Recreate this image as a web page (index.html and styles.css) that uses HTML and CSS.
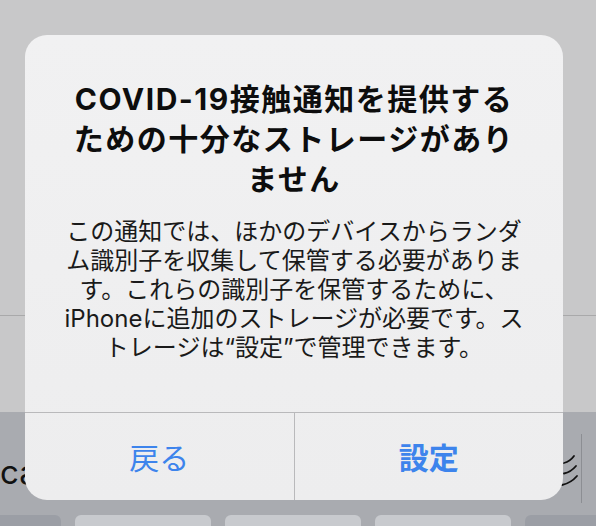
FILE: index.html
```html
<!DOCTYPE html>
<html lang="ja">
<head>
<meta charset="utf-8">
<title>Alert</title>
<link rel="stylesheet" href="styles.css">
</head>
<body>
<div class="screen">
  <div class="backdrop">
    <div class="backdrop-upper"></div>
  </div>
  <div class="keyboard">
    <div class="suggest-bar">
      <span class="suggest-word">ca</span>
      <div class="suggest-right">
        <svg class="suggest-glyph" width="22" height="38" viewBox="0 0 22 38">
          <path d="M5 12 Q11 10.5 15 5" fill="none" stroke="#111" stroke-width="1.8" stroke-linecap="round"/>
          <path d="M5 22.5 Q12 21 17 15" fill="none" stroke="#111" stroke-width="1.8" stroke-linecap="round"/>
          <path d="M3 34 Q12 32 18 25" fill="none" stroke="#111" stroke-width="1.8" stroke-linecap="round"/>
        </svg>
        <div class="suggest-divider"></div>
      </div>
    </div>
    <div class="key-row">
      <div class="key key-dark key-first"></div>
      <div class="key key-light"></div>
      <div class="key key-light"></div>
      <div class="key key-light"></div>
      <div class="key key-dark key-last"></div>
    </div>
  </div>

  <div class="alert">
    <div class="alert-message">
      <h1 class="alert-title">COVID-19接触通知を提供する<br>ための十分なストレージがあり<br>ません</h1>
      <p class="alert-body">この通知では、ほかのデバイスからランダ<br>ム識別子を収集して保管する必要がありま<br>す。これらの識別子を保管するために、<br>iPhoneに追加のストレージが必要です。ス<br>トレージは“設定”で管理できます。</p>
    </div>
    <div class="alert-actions">
      <div class="alert-button">戻る</div>
      <div class="alert-button alert-button-primary">設定</div>
    </div>
  </div>
</div>
</body>
</html>
```
FILE: styles.css
```css
* { box-sizing: border-box; }

html, body {
  margin: 0;
  padding: 0;
}

body {
  width: 596px;
  height: 526px;
  overflow: hidden;
  font-family: Inter, "Noto Sans CJK JP", sans-serif;
  background: #c8c8c8;
}

.screen {
  position: relative;
  width: 596px;
  height: 526px;
  overflow: hidden;
  display: flex;
  flex-direction: column;
}

.backdrop {
  height: 412px;
  background: #c8c8c9;
}

.backdrop-upper {
  height: 316px;
  border-bottom: 1px solid #a9a9aa;
}

.keyboard {
  flex: 1;
  background: #a9abb0;
  display: flex;
  flex-direction: column;
}

.suggest-bar {
  height: 103px;
  display: flex;
  align-items: center;
  justify-content: space-between;
}

.suggest-word {
  font-family: Inter, "Liberation Sans", sans-serif;
  font-size: 33px;
  color: #111;
  margin-left: 0;
  margin-top: 16px;
}

.suggest-right {
  display: flex;
  align-items: center;
  margin-right: 14px;
}

.suggest-glyph {
  display: block;
  margin-top: 13px;
}

.suggest-divider {
  width: 1px;
  height: 69px;
  background: #8c8e93;
  margin-top: 10px;
}

.key-row {
  flex: 1;
  display: flex;
  gap: 14px;
}

.key {
  border-radius: 6px 6px 0 0;
}

.key-first { width: 61px; border-top-left-radius: 0; }
.key-light { width: 136px; }
.key-last { flex: 1; border-top-right-radius: 0; }

.key-dark { background: #9b9ea5; }
.key-light { background: #c8cace; }

.alert {
  position: absolute;
  left: 25px;
  top: 35px;
  width: 538px;
  height: 465px;
  border-radius: 22px;
  background: linear-gradient(180deg, #f1f1f2 0%, #ededee 100%);
  display: flex;
  flex-direction: column;
  overflow: hidden;
}

.alert-message {
  height: 377px;
  padding: 44px 16px 0;
  text-align: center;
  color: #0d0d0d;
}

.alert-title {
  margin: 0;
  font-size: 30px;
  line-height: 40px;
  font-weight: 700;
  letter-spacing: 1.5px;
}

.alert-body {
  margin: 18px 0 0;
  font-size: 24px;
  line-height: 29px;
  font-weight: 400;
  color: #1a1a1a;
}

.alert-actions {
  flex: 1;
  display: flex;
  border-top: 1px solid #b9b9bb;
}

.alert-button {
  flex: 1;
  display: flex;
  align-items: center;
  justify-content: center;
  font-size: 30px;
  color: #3d84ec;
  padding-bottom: 2px;
}

.alert-button + .alert-button {
  border-left: 1px solid #b9b9bb;
}

.alert-button-primary {
  font-weight: 700;
}
```
